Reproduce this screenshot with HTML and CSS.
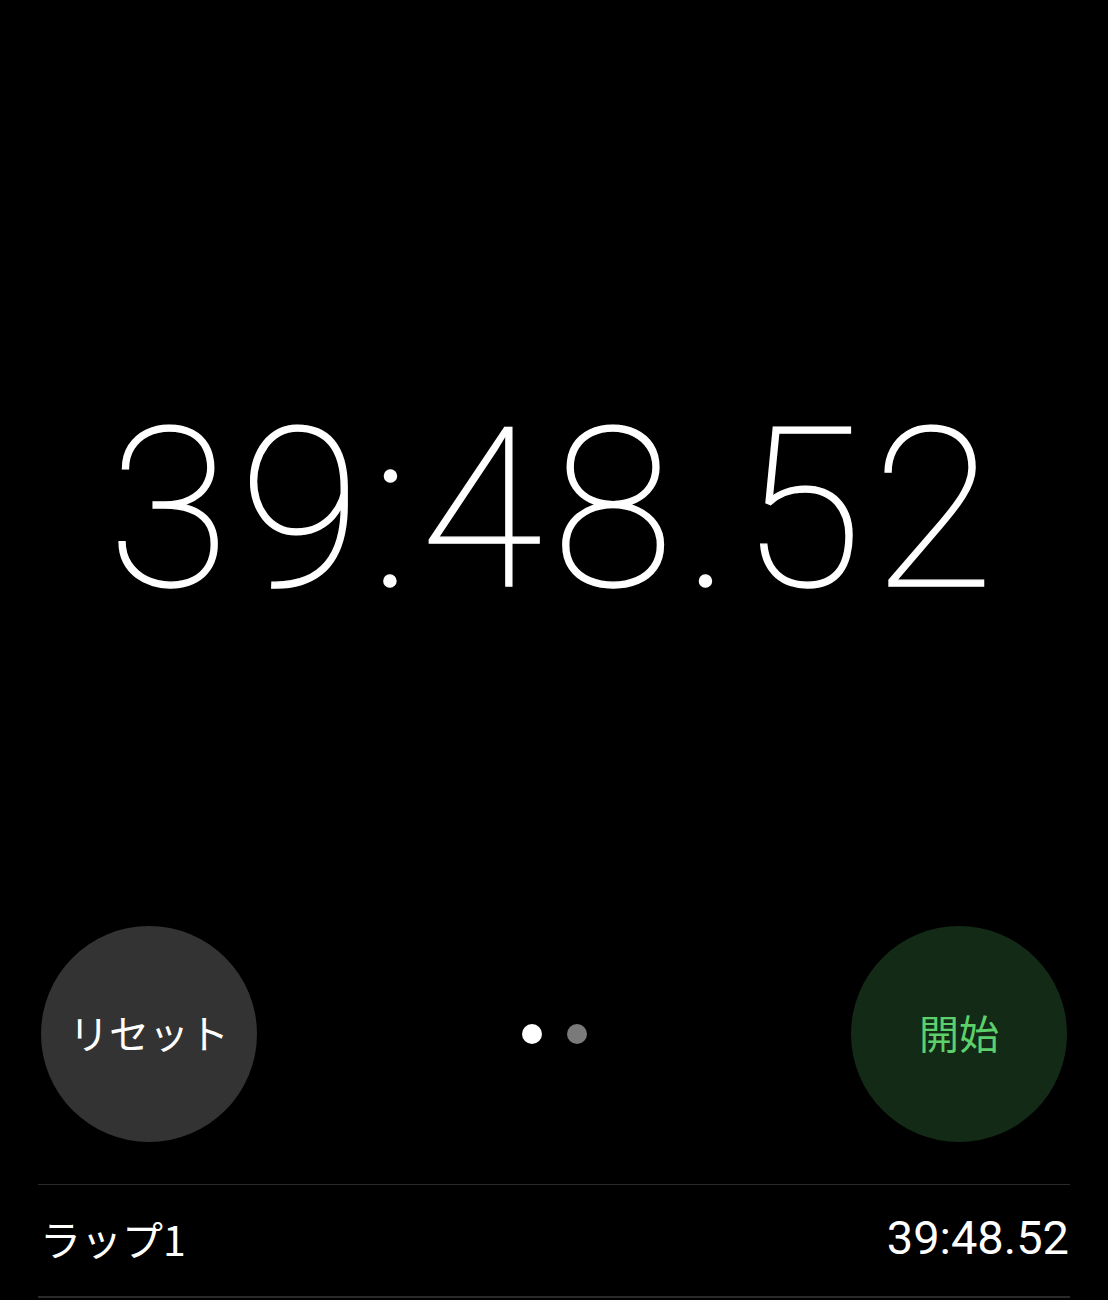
FILE: index.html
```html
<!DOCTYPE html>
<html lang="ja">
<head>
<meta charset="utf-8">
<link rel="stylesheet" href="styles.css">
</head>
<body>
<div class="screen">
  <div class="display">
    <div class="time">39:48.52</div>
  </div>
  <div class="controls">
    <button class="btn btn-reset">リセット</button>
    <div class="dots"><span class="dot active"></span><span class="dot"></span></div>
    <button class="btn btn-start">開始</button>
  </div>
  <div class="laps">
    <div class="lap">
      <span class="lap-name">ラップ1</span>
      <span class="lap-time">39:48.52</span>
    </div>
  </div>
</div>
</body>
</html>
```

FILE: styles.css
```css
html, body {
  margin: 0;
  padding: 0;
  background: #000;
}
body {
  width: 1108px;
  height: 1300px;
  overflow: hidden;
  color: #fff;
  font-family: Roboto, "Noto Sans CJK JP", sans-serif;
}
.screen {
  display: flex;
  flex-direction: column;
  height: 1300px;
}
.display {
  box-sizing: border-box;
  height: 926px;
  padding-top: 399px;
  text-align: center;
}
.time {
  font-family: Roboto, sans-serif;
  font-weight: 100;
  font-size: 222px;
  letter-spacing: 10px;
  margin-right: -4px;
  line-height: 1;
  -webkit-text-stroke: 1.4px #fff;
  white-space: nowrap;
}
.controls {
  display: flex;
  align-items: center;
  justify-content: space-between;
  padding: 0 41px;
  height: 216px;
}
.btn {
  width: 216px;
  height: 216px;
  border-radius: 50%;
  border: none;
  font-family: "Noto Sans CJK JP", sans-serif;
  font-size: 40px;
  padding: 0 0 4px 0;
  margin: 0;
}
.btn-reset {
  background: #333333;
  color: #fff;
}
.btn-start {
  background: #122a16;
  color: #5dd06b;
}
.dots {
  display: flex;
  gap: 25px;
  margin-left: 1px;
}
.dot {
  width: 20px;
  height: 20px;
  border-radius: 50%;
  background: #7a7a7a;
}
.dot.active {
  background: #fff;
}
.laps {
  margin: 42px 38px 0 38px;
  border-top: 1px solid #2a2a2a;
}
.lap {
  display: flex;
  justify-content: space-between;
  align-items: center;
  height: 113px;
  padding-bottom: 6px;
  box-sizing: border-box;
  border-bottom: 2px solid #2a2a2a;
}
.lap-name {
  font-family: "Noto Sans CJK JP", sans-serif;
  font-size: 41px;
  margin-left: 2px;
}
.lap-time {
  font-family: Roboto, sans-serif;
  font-size: 47px;
  letter-spacing: 0;
  margin-right: 1px;
}
```
